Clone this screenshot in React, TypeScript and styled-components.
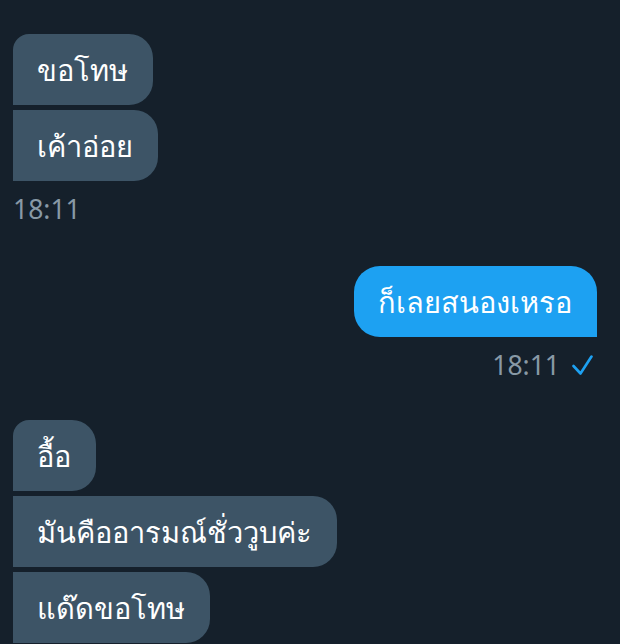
import React from "react";
import styled, { createGlobalStyle } from "styled-components";

const GlobalStyle = createGlobalStyle`
  html, body {
    margin: 0;
    padding: 0;
    background: #15202b;
  }
  body {
    font-family: "Noto Sans", Roboto, "DejaVu Sans", sans-serif;
  }
`;

const received = [
  { id: 1, lines: ["ขอโทษ", "เค้าอ่อย"], time: "18:11" },
];

function Check() {
  return (
    <svg width="22" height="20" viewBox="0 0 22 20">
      <path
        d="M2.5 11 L9.5 18.5 L20.5 1.5"
        fill="none"
        stroke="#1da1f2"
        strokeWidth="2.6"
        strokeLinecap="round"
        strokeLinejoin="round"
      />
    </svg>
  );
}

export default function App() {
  return (
    <>
      <GlobalStyle />
      <Page>
        <Group side="left" gapAfter={42}>
          {received[0].lines.map((text, i) => (
            <Bubble key={text} side="left" first={i === 0}>
              {text}
            </Bubble>
          ))}
          <Meta side="left">
            <Time>{received[0].time}</Time>
          </Meta>
        </Group>

        <Group side="right" gapAfter={40}>
          <Bubble side="right" first>
            ก็เลยสนองเหรอ
          </Bubble>
          <Meta side="right">
            <Time>18:11</Time>
            <Check />
          </Meta>
        </Group>

        <Group side="left" gapAfter={0}>
          <Bubble side="left" first>
            อื้อ
          </Bubble>
          <Bubble side="left">มันคืออารมณ์ชั่ววูบค่ะ</Bubble>
          <Bubble side="left">แด๊ดขอโทษ</Bubble>
        </Group>
      </Page>
    </>
  );
}

const Page = styled.div`
  display: flex;
  flex-direction: column;
  padding: 34px 23px 0 13px;
  height: 644px;
  box-sizing: border-box;
  overflow: hidden;
`;

const Group = styled.div<{ side: "left" | "right"; gapAfter: number }>`
  display: flex;
  flex-direction: column;
  align-items: ${(p) => (p.side === "left" ? "flex-start" : "flex-end")};
  gap: 5px;
  margin-bottom: ${(p) => p.gapAfter}px;
`;

const Bubble = styled.div<{ side: "left" | "right"; first?: boolean }>`
  padding: 20px 25px 20px 24px;
  font-size: 29px;
  line-height: 31px;
  color: #ffffff;
  background: ${(p) => (p.side === "left" ? "#3d5466" : "#1da1f2")};
  border-radius: ${(p) =>
    p.side === "left"
      ? `${p.first ? 16 : 0}px 24px 24px 0`
      : "26px 26px 0 26px"};
  white-space: nowrap;
`;

const Meta = styled.div<{ side: "left" | "right" }>`
  display: flex;
  align-items: center;
  gap: 11px;
  margin-top: 8px;
  padding-right: ${(p) => (p.side === "right" ? "4px" : "0")};
`;

const Time = styled.span`
  font-size: 26.5px;
  line-height: 30px;
  color: #8899a6;
`;
